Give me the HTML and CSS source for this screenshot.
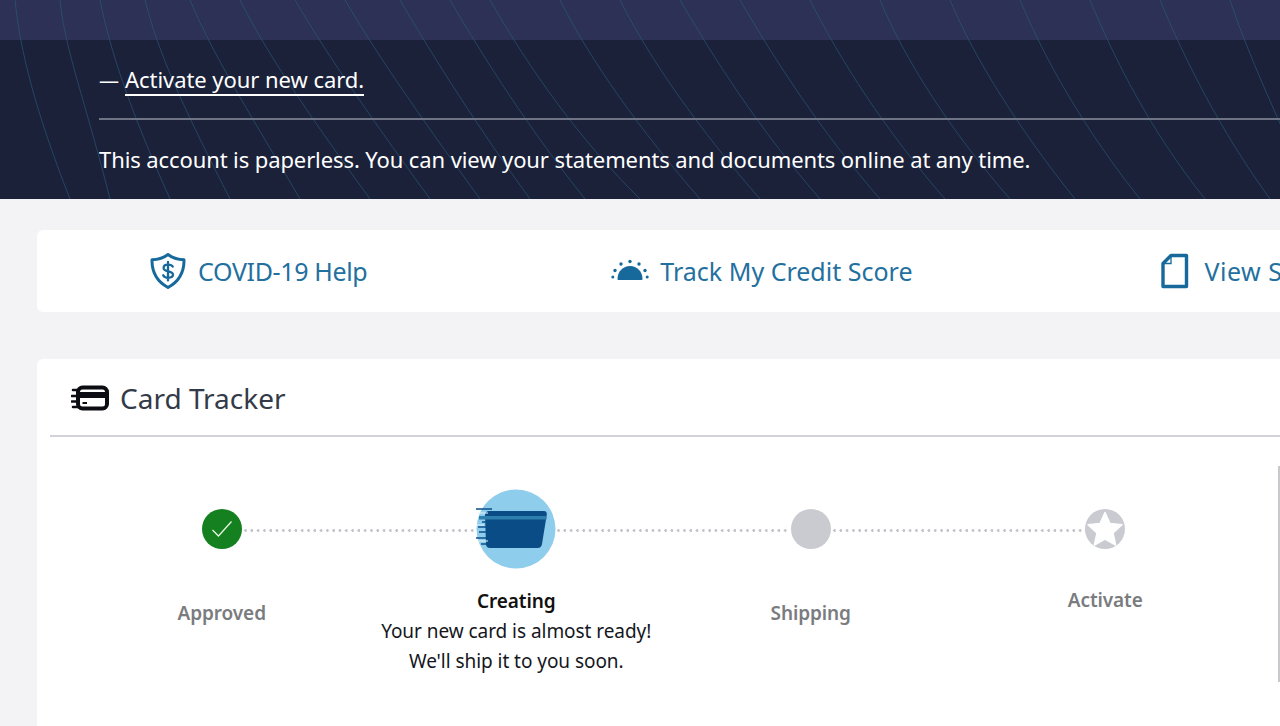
FILE: index.html
```html
<!DOCTYPE html>
<html lang="en">
<head>
<meta charset="utf-8">
<title>Card Tracker</title>
<link rel="stylesheet" href="styles.css">
</head>
<body>
<div class="page">
  <header class="hero">
    <div class="hero-top"></div>
    <svg class="waves" width="1280" height="199" viewBox="0 0 1280 199" fill="none" aria-hidden="true">
      <g stroke="#2a5f80" stroke-width="1" opacity=".6">
        <path d="M15 0C20 50 35 110 70 199"/>
        <path d="M60 0C65 50 85 100 110 199"/>
        <path d="M100 0C110 50 130 110 170 199"/>
        <path d="M145 0C160 60 190 120 230 199"/>
        <path d="M190 0C215 60 260 130 300 199"/>
        <path d="M240 0C270 60 320 130 370 199"/>
        <path d="M295 0C330 60 380 130 430 199"/>
        <path d="M345 0C380 60 430 130 480 199"/>
        <path d="M400 0C435 60 480 130 530 199"/>
        <path d="M450 0C485 60 530 130 585 199"/>
        <path d="M490 0C530 70 580 140 640 199"/>
        <path d="M560 0C590 60 640 130 700 199"/>
        <path d="M620 0C650 60 700 130 760 199"/>
        <path d="M680 0C715 60 760 130 820 199"/>
        <path d="M740 0C775 60 820 130 880 199"/>
        <path d="M810 0C840 60 885 130 945 199"/>
        <path d="M880 0C905 60 950 130 1010 199"/>
        <path d="M950 0C975 60 1020 130 1075 199"/>
        <path d="M1020 0C1045 60 1085 130 1140 199"/>
        <path d="M1090 0C1115 60 1150 130 1205 199"/>
        <path d="M1160 0C1185 60 1220 130 1270 199"/>
        <path d="M1230 0C1250 60 1275 110 1300 170"/>
      </g>
    </svg>
    <div class="hero-body">
      <p class="task"><span class="dash">—</span><a class="task-link" href="#">Activate your new card.</a></p>
      <hr class="hero-rule">
      <p class="paperless">This account is paperless. You can view your statements and documents online at any time.</p>
    </div>
  </header>

  <nav class="quick card">
    <a class="quick-item q1" href="#">
      <svg width="38" height="38" viewBox="0 0 38 38" fill="none"><path d="M19 2.500C14.500 6 9.500 7.500 3 7.800C2.800 20 7 29 19 35.500C31 29 35.200 20 35 7.800C28.500 7.500 23.500 6 19 2.500Z" stroke="#17699c" stroke-width="3" stroke-linejoin="round"/><path d="M23.700 14.600C22.900 13 21 12.600 19 12.600C16.600 12.600 14.600 13.800 14.600 15.900C14.600 20.600 24 18 24 22.600C24 24.800 21.600 25.800 19 25.800C16.800 25.800 15 25 14.200 23.300M19 10V28.400" stroke="#17699c" stroke-width="2.300" stroke-linecap="round"/></svg>
      <span>COVID-19 Help</span>
    </a>
    <a class="quick-item q2" href="#">
      <svg width="38" height="24" viewBox="0 0 38 24" fill="#17699c"><path d="M6.500 20C6.500 12.500 12 7 19 7S31.500 12.500 31.500 20C31.500 20.600 31 21 30.500 21H7.500C7 21 6.500 20.600 6.500 20Z"/><circle cx="19" cy="2.500" r="1.700"/><circle cx="10" cy="5" r="1.700"/><circle cx="28" cy="5" r="1.700"/><circle cx="4" cy="11.500" r="1.700"/><circle cx="34" cy="11.500" r="1.700"/><circle cx="1.800" cy="18" r="1.500"/><circle cx="36.200" cy="18" r="1.500"/></svg>
      <span>Track My Credit Score</span>
    </a>
    <a class="quick-item q3" href="#">
      <svg width="28" height="36" viewBox="0 0 28 36" fill="none"><path d="M10 2.500H25.500V33.500H2V10.500Z" stroke="#17699c" stroke-width="3.400" stroke-linejoin="round"/><path d="M10 3V10.500H3" stroke="#17699c" stroke-width="1.300"/></svg>
      <span>View Statements</span>
    </a>
  </nav>

  <section class="tracker card">
    <h2 class="tracker-title">
      <svg width="38" height="26" viewBox="0 0 38 26" fill="none"><rect x="7" y="2.500" width="29" height="21" rx="4.500" stroke="#0c0d12" stroke-width="4"/><path d="M6 7H36V13H6Z" fill="#0c0d12"/><path d="M11.500 18H16" stroke="#0c0d12" stroke-width="2"/><path d="M2 5H7M0.800 11H7M0.800 16.500H7M2 22H7" stroke="#0c0d12" stroke-width="2.600" stroke-linecap="round"/></svg>
      <span>Card Tracker</span>
    </h2>
    <ol class="steps">
      <li class="step step-approved">
        <div class="step-icon link-right">
          <svg width="40" height="40" viewBox="0 0 40 40"><circle cx="20" cy="20" r="20" fill="#14801f"/><path d="M10.500 21L16.500 27L29.500 12.500" fill="none" stroke="#e8f5e4" stroke-width="1.300"/></svg>
        </div>
        <p class="step-name">Approved</p>
      </li>
      <li class="step step-creating">
        <div class="step-icon link-right">
          <svg width="80" height="80" viewBox="0 0 80 80"><circle cx="40" cy="40" r="39.500" fill="#8fcdec"/><path d="M9 26C9 23.500 11 22 13 22H68C70 22 71 23.500 70.800 25.500L66 55C65.600 57.500 64 59 62 59H14C11.500 59 10 57.500 10 55Z" fill="#0a4d86"/><path d="M3 27H70.500V30.500H3Z" fill="#2f7fae"/><path d="M0 20H16M6 33H20M0 49H14M3 43H18M5 55H14M2 38H10" stroke="#0a4d86" stroke-width="1.600"/><path d="M2 24H12M1 36H8M3 52H12" stroke="#e3f4fb" stroke-width="1.200"/></svg>
        </div>
        <p class="step-name step-name-on">Creating</p>
        <p class="step-note">Your new card is almost ready!</p>
        <p class="step-note">We'll ship it to you soon.</p>
      </li>
      <li class="step step-shipping">
        <div class="step-icon link-right"><span class="dot-grey"></span></div>
        <p class="step-name">Shipping</p>
      </li>
      <li class="step step-activate">
        <div class="step-icon">
          <svg width="40" height="40" viewBox="0 0 40 40"><circle cx="20" cy="20" r="20" fill="#c9cbd0"/><path d="M20 3.500L25 14.500L37 15.800L28 24L30.600 36L20 30L9.400 36L12 24L3 15.800L15 14.500Z" fill="#fff" stroke="#fff" stroke-width="1.500" stroke-linejoin="round"/></svg>
        </div>
        <p class="step-name">Activate</p>
      </li>
    </ol>
  </section>
</div>
</body>
</html>
```
FILE: styles.css
```css
* { box-sizing: border-box; }
html, body { margin: 0; padding: 0; height: 100%; overflow: hidden; }
body {
  background: #f3f2f5;
  font-family: "Noto Sans", "Open Sans", "Liberation Sans", sans-serif;
}
.page { width: 1280px; height: 726px; overflow: hidden; }

.hero {
  position: relative;
  height: 199px;
  background: #1b2139;
  color: #fff;
  overflow: hidden;
}
.waves { position: absolute; left: 0; top: 0; }
.hero-top { height: 40px; background: #2c3155; }
.hero-body { position: relative; padding: 24px 0 0 99px; }
.task { margin: 0; height: 31px; font-size: 22px; line-height: 31px; letter-spacing: -.05px; white-space: nowrap; }
.dash { display: inline-block; width: 26px; font-size: 20px; }
.task-link { color: #fff; text-decoration: none; border-bottom: 2px solid #fff; }
.hero-rule { margin: 23px 0 0; border: 0; height: 2px; background: #6f7485; }
.paperless { margin: 24px 0 0; font-size: 22px; line-height: 31px; letter-spacing: -.1px; white-space: nowrap; }

.card { background: #fff; border-radius: 6px 0 0 6px; margin-left: 37px; }

.quick { display: flex; align-items: center; height: 82px; margin-top: 31px; white-space: nowrap; overflow: hidden; }
.quick-item { display: flex; align-items: center; color: #23709f; text-decoration: none; font-size: 25px; line-height: 32px; }
.q1 { margin-left: 112px; gap: 11px; letter-spacing: -.35px; }
.q2 { margin-left: 244px; gap: 11px; letter-spacing: 0; }
.q3 { margin-left: 248px; gap: 16px; letter-spacing: .5px; }

.tracker { height: 400px; margin-top: 47px; padding: 0 0 0 13px; }
.tracker-title {
  display: flex; align-items: center; gap: 11px;
  height: 78px; margin: 0; padding: 2px 0 0 21px;
  border-bottom: 2px solid #d2d3d7;
  color: #333a48; font-weight: 400; font-size: 28px;
}

.steps {
  list-style: none;
  display: grid;
  grid-template-columns: repeat(4, 294.5px);
  height: 216px;
  margin: 29px 0 0;
  padding: 0 0 0 24.500px;
  border-right: 2px solid #c8c9cd;
  text-align: center;
}
.step { display: flex; flex-direction: column; align-items: center; }
.step-icon {
  position: relative;
  display: flex; align-items: center; justify-content: center;
  width: 80px; height: 80px; margin-top: 23px;
}
.link-right::after {
  content: "";
  position: absolute;
  top: 40px;
  height: 3px;
  background: radial-gradient(circle at 1.500px 1.500px, #c2c1ca 1.200px, transparent 1.500px) 0 0 / 6.300px 3px repeat-x;
}
.step-approved .link-right::after { left: 62px; width: 233px; }
.step-creating .link-right::after { left: 81px; width: 233px; }
.step-shipping .link-right::after { left: 62px; width: 253px; }

.dot-grey { width: 40px; height: 40px; border-radius: 50%; background: #c9cbd0; }

.step-name { margin: 0; font-size: 19px; line-height: 30px; font-weight: 600; color: #7a7c80; letter-spacing: -.1px; white-space: nowrap; }
.step-approved .step-name, .step-shipping .step-name { margin-top: 29px; }
.step-activate .step-name { margin-top: 16px; }
.step-creating .step-name { margin-top: 17px; }
.step-name-on { color: #111; }
.step-note { margin: 0; font-size: 19px; line-height: 30px; color: #14161c; letter-spacing: -.05px; white-space: nowrap; }
```
